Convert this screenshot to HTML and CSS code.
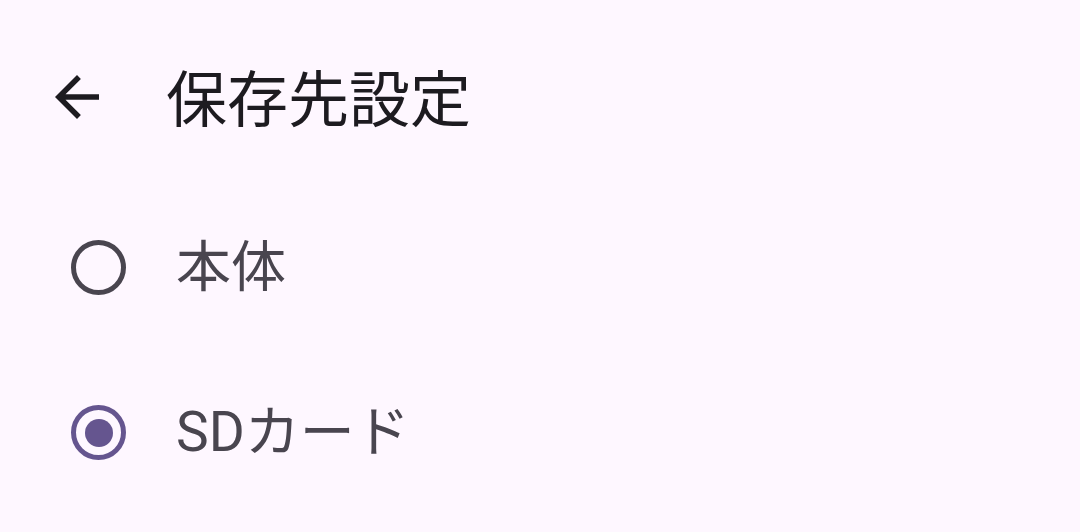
FILE: index.html
```html
<!DOCTYPE html>
<html lang="ja">
<head>
<meta charset="utf-8">
<link rel="stylesheet" href="styles.css">
</head>
<body>
<div class="app">
  <header class="topbar">
    <button class="back" aria-label="戻る">
      <svg viewBox="0 0 24 24" width="66" height="66"><path fill="#1d1b20" d="M20 11H7.83l5.59-5.59L12 4l-8 8 8 8 1.41-1.41L7.83 13H20v-2z"/></svg>
    </button>
    <h1 class="title">保存先設定</h1>
  </header>
  <ul class="options">
    <li class="option">
      <span class="radio"></span>
      <span class="label">本体</span>
    </li>
    <li class="option">
      <span class="radio checked"><span class="dot"></span></span>
      <span class="label">SDカード</span>
    </li>
  </ul>
</div>
</body>
</html>
```
FILE: styles.css
```css
html, body {
  margin: 0;
  padding: 0;
  background: #fef7ff;
  height: 100%;
}
.app {
  font-family: "Roboto", "Noto Sans CJK JP", sans-serif;
  width: 1080px;
  height: 532px;
  overflow: hidden;
}
.topbar {
  display: flex;
  align-items: center;
  height: 172px;
  padding-top: 13px;
  padding-left: 44px;
}
.back {
  border: 0;
  background: none;
  padding: 0;
  margin: 0;
  width: 66px;
  height: 66px;
  display: flex;
  margin-top: -4px;
}
.title {
  margin: -8px 0 0 56px;
  font-family: "Noto Sans CJK JP", sans-serif;
  font-weight: 400;
  font-size: 61px;
  color: #1d1b20;
  line-height: 1;
}
.options {
  list-style: none;
  margin: 0;
  padding: 0;
}
.option {
  display: flex;
  align-items: center;
  height: 165px;
  padding-left: 71px;
}
.radio {
  box-sizing: border-box;
  width: 55px;
  height: 55px;
  border: 5.5px solid #49454f;
  border-radius: 50%;
  display: flex;
  align-items: center;
  justify-content: center;
  flex: none;
}
.radio.checked {
  border-color: #65558f;
}
.dot {
  width: 28px;
  height: 28px;
  border-radius: 50%;
  background: #65558f;
}
.label {
  margin-left: 50px;
  font-size: 55px;
  color: #49454f;
  line-height: 1;
}
```
